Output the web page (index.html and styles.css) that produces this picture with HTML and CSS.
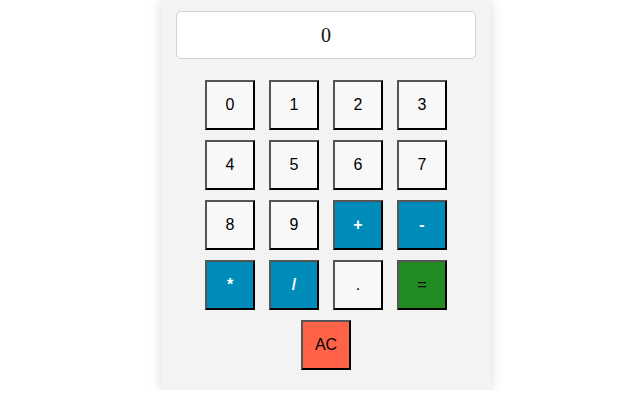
FILE: index.html
```html
<!DOCTYPE html>
<html>
<head>
<meta charset="utf-8">
<link rel="stylesheet" href="styles.css">
</head>
<body>
<div class="calc">
  <div class="display">0</div>
  <div class="keys">
    <button class="key">0</button>
    <button class="key">1</button>
    <button class="key">2</button>
    <button class="key">3</button>
    <button class="key">4</button>
    <button class="key">5</button>
    <button class="key">6</button>
    <button class="key">7</button>
    <button class="key">8</button>
    <button class="key">9</button>
    <button class="key op">+</button>
    <button class="key op">-</button>
    <button class="key op">*</button>
    <button class="key op">/</button>
    <button class="key">.</button>
    <button class="key eq">=</button>
  </div>
  <div class="last">
    <button class="key clear">AC</button>
  </div>
</div>
</body>
</html>
```
FILE: styles.css
```css
html, body {
  margin: 0;
  padding: 0;
  background: #ffffff;
}
body {
  font-family: "Liberation Sans", Arial, sans-serif;
}
.calc {
  width: 330px;
  box-sizing: border-box;
  margin-left: 161px;
  background: #f3f3f3;
  padding: 11px 15px 20px 15px;
  border-radius: 0 0 6px 6px;
  box-shadow: 0 2px 12px rgba(0, 0, 0, 0.15);
}
.display {
  width: 300px;
  height: 48px;
  box-sizing: border-box;
  background: #ffffff;
  border: 1px solid #d0d0d0;
  border-radius: 5px;
  font-family: "Liberation Serif", "Times New Roman", serif;
  font-size: 20px;
  color: #111;
  display: flex;
  align-items: center;
  justify-content: center;
}
.keys {
  display: grid;
  grid-template-columns: repeat(4, 50px);
  column-gap: 14px;
  row-gap: 10px;
  justify-content: center;
  margin-top: 21px;
}
.last {
  display: flex;
  justify-content: center;
  margin-top: 10px;
}
.key {
  width: 50px;
  height: 50px;
  box-sizing: border-box;
  margin: 0;
  padding: 0;
  background: #f8f8f8;
  border: 2px solid;
  border-color: #555555 #000000 #000000 #555555;
  font-family: "Liberation Sans", Arial, sans-serif;
  font-size: 16px;
  color: #000;
}
.op {
  background: #008cba;
  color: #ffffff;
  font-weight: bold;
}
.eq {
  background: #228b22;
  color: #000;
}
.clear {
  background: #ff6347;
  color: #000;
}
```
